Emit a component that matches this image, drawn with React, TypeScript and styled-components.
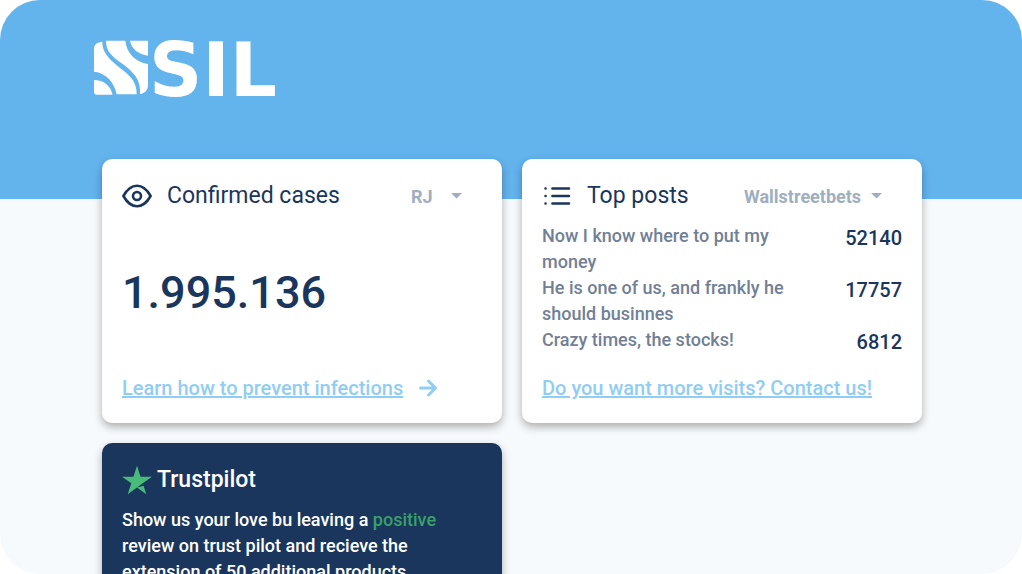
import React from "react";
import styled, { createGlobalStyle } from "styled-components";

const color = {
  sky: "#63b3ed",
  page: "#f7fafc",
  navy: "#1a365d",
  link: "#90cdf4",
  muted: "#a0aec0",
  slate: "#718096",
  star: "#48bb78",
  positive: "#38a169",
};

const GlobalStyle = createGlobalStyle`
  *, *::before, *::after { box-sizing: border-box; }
  body {
    margin: 0;
    background: #fff;
    color: ${color.navy};
    font-family: Roboto, "Liberation Sans", sans-serif;
  }
  h1, h2, p, ul { margin: 0; padding: 0; }
`;

const Frame = styled.div`
  height: 100vh;
  overflow: hidden;
  border-radius: 40px;
  background: ${color.page};
`;

const Banner = styled.header`
  height: 199px;
  padding: 20px 94px 0;
  background: ${color.sky};
`;

const Logo = styled.svg`
  display: block;
  width: 200px;
  height: 100px;
  fill: #fff;
`;

const Wordmark = styled.text`
  font-family: "DejaVu Sans", sans-serif;
  font-size: 74px;
  font-weight: 700;
`;

const Board = styled.main`
  display: grid;
  grid-template-columns: repeat(auto-fill, minmax(380px, 1fr));
  gap: 20px;
  margin-top: -40px;
  padding: 0 100px 40px 102px;
`;

const Card = styled.section<{ $dark?: boolean }>`
  display: flex;
  flex-direction: column;
  justify-content: ${(p) => (p.$dark ? "flex-start" : "space-between")};
  min-height: 264px;
  padding: 20px;
  border-radius: 10px;
  background: ${(p) => (p.$dark ? color.navy : "#fff")};
  color: ${(p) => (p.$dark ? "#fff" : color.navy)};
  box-shadow: 0 4px 8px rgba(0, 0, 0, 0.3);
`;

const CardHead = styled.div<{ $gap?: number }>`
  display: flex;
  align-items: center;
  gap: ${(p) => p.$gap ?? 15}px;
  height: 34px;
`;

const Icon = styled.svg`
  flex: none;
  width: 30px;
  height: 30px;
`;

const Title = styled.h2<{ $strong?: boolean }>`
  flex: 1;
  font-size: 23px;
  line-height: 32px;
  font-weight: ${(p) => (p.$strong ? 500 : 400)};
`;

const Picker = styled.span`
  display: flex;
  align-items: center;
  margin-right: 20px;
  color: ${color.muted};
`;

const Select = styled.select<{ $width: number }>`
  width: ${(p) => p.$width}px;
  height: 30px;
  padding: 0;
  border: 0;
  appearance: none;
  background: transparent;
  color: inherit;
  font: 700 18px Roboto, "Liberation Sans", sans-serif;
`;

const Caret = styled.svg`
  flex: none;
  width: 11px;
  height: 6px;
  fill: currentColor;
  pointer-events: none;
`;

const Figure = styled.p`
  font-size: 45px;
  line-height: 52px;
  font-weight: 500;
`;

const Posts = styled.ul`
  flex: 1;
  margin-top: 10px;
  list-style: none;
`;

const Post = styled.li`
  display: flex;
  justify-content: space-between;
  align-items: flex-start;
`;

const PostTitle = styled.span`
  width: 250px;
  color: ${color.slate};
  font-size: 18px;
  line-height: 26px;
  font-weight: 500;
`;

const Score = styled.span`
  font-size: 20px;
  line-height: 30px;
  font-weight: 500;
`;

const Action = styled.div`
  display: flex;
  align-items: center;
  gap: 15px;
  height: 30px;
  color: ${color.link};
`;

const Link = styled.a`
  color: inherit;
  font-size: 20px;
  line-height: 30px;
  font-weight: 500;
`;

const Arrow = styled.svg`
  width: 20px;
  height: 20px;
`;

const Copy = styled.p`
  margin-top: 10px;
  max-width: 330px;
  font-size: 18px;
  line-height: 26px;
  font-weight: 500;
`;

const Positive = styled.span`
  color: ${color.positive};
`;

const posts = [
  { title: "Now I know where to put my money", score: 52140 },
  { title: "He is one of us, and frankly he should businnes", score: 17757 },
  { title: "Crazy times, the stocks!", score: 6812 },
];

function Dropdown({ label, width, options }: { label: string; width: number; options: string[] }) {
  return (
    <Picker>
      <Select aria-label={label} $width={width}>
        {options.map((o) => (
          <option key={o}>{o}</option>
        ))}
      </Select>
      <Caret viewBox="0 0 11 6" aria-hidden="true">
        <path d="M0 0h11L5.5 5.5z" />
      </Caret>
    </Picker>
  );
}

export default function App() {
  return (
    <Frame>
      <GlobalStyle />
      <Banner>
        <Logo viewBox="0 0 200 100" role="img" aria-label="SIL">
          <g transform="translate(-14 5) scale(.33333)">
            <path d="M42 72C42 58 52 51 67 50C66 85 90 105 125 133C155 155 170 175 170 208H110C104 175 80 143 42 140Z" />
            <path d="M78 47H136C140 84 165 110 204 117V180C204 195 195 205 180 207C182 165 165 145 125 115C95 92 78 80 78 47Z" />
            <path d="M150 47H204V92C175 88 155 72 150 47Z" />
            <path d="M42 165C70 165 90 180 98 209H50Q42 209 42 200Z" />
          </g>
          <Wordmark x="55" y="76">SIL</Wordmark>
        </Logo>
      </Banner>
      <Board>
        <Card>
          <CardHead>
            <Icon viewBox="0 0 30 30" fill="none" stroke="currentColor" strokeWidth="2.6" aria-hidden="true">
              <path d="M1.4 15C5 8.5 9.5 4.8 15 4.8S25 8.5 28.6 15C25 21.5 20.5 25.2 15 25.2S5 21.5 1.4 15Z" strokeLinejoin="round" />
              <circle cx="15" cy="15" r="4" />
            </Icon>
            <Title>Confirmed cases</Title>
            <Dropdown label="State" width={40} options={["RJ", "SP"]} />
          </CardHead>
          <Figure>1.995.136</Figure>
          <Action>
            <Link href="#prevention">Learn how to prevent infections</Link>
            <Arrow viewBox="0 0 20 20" fill="none" stroke="currentColor" strokeWidth="3" strokeLinecap="round" strokeLinejoin="round" aria-hidden="true">
              <path d="M2.5 10H17.5M10.5 3L17.5 10L10.5 17" />
            </Arrow>
          </Action>
        </Card>

        <Card>
          <CardHead>
            <Icon viewBox="0 0 30 30" fill="none" stroke="currentColor" strokeWidth="2.5" strokeLinecap="round" aria-hidden="true">
              <path d="M10.4 7.5H27M10.4 15H27M10.4 22.5H27M3.5 7.5h.1M3.5 15h.1M3.5 22.5h.1" />
            </Icon>
            <Title>Top posts</Title>
            <Dropdown label="Community" width={127} options={["Wallstreetbets", "Stocks"]} />
          </CardHead>
          <Posts>
            {posts.map((p) => (
              <Post key={p.score}>
                <PostTitle>{p.title}</PostTitle>
                <Score>{p.score}</Score>
              </Post>
            ))}
          </Posts>
          <Action>
            <Link href="#contact">Do you want more visits? Contact us!</Link>
          </Action>
        </Card>

        <Card $dark>
          <CardHead $gap={5}>
            <Icon viewBox="0 0 24 24" fill={color.star} aria-hidden="true">
              <path d="M17.227 16.67l2.19 6.742-7.413-5.388 5.223-1.354zM24 9.31h-9.165L12.005.589l-2.84 8.723L0 9.3l7.422 5.397-2.84 8.714 7.422-5.388 4.583-3.326L24 9.311z" />
            </Icon>
            <Title $strong>Trustpilot</Title>
          </CardHead>
          <Copy>
            Show us your love bu leaving a <Positive>positive</Positive> review on trust pilot and recieve the extension of
            50 additional products.
          </Copy>
        </Card>
      </Board>
    </Frame>
  );
}
